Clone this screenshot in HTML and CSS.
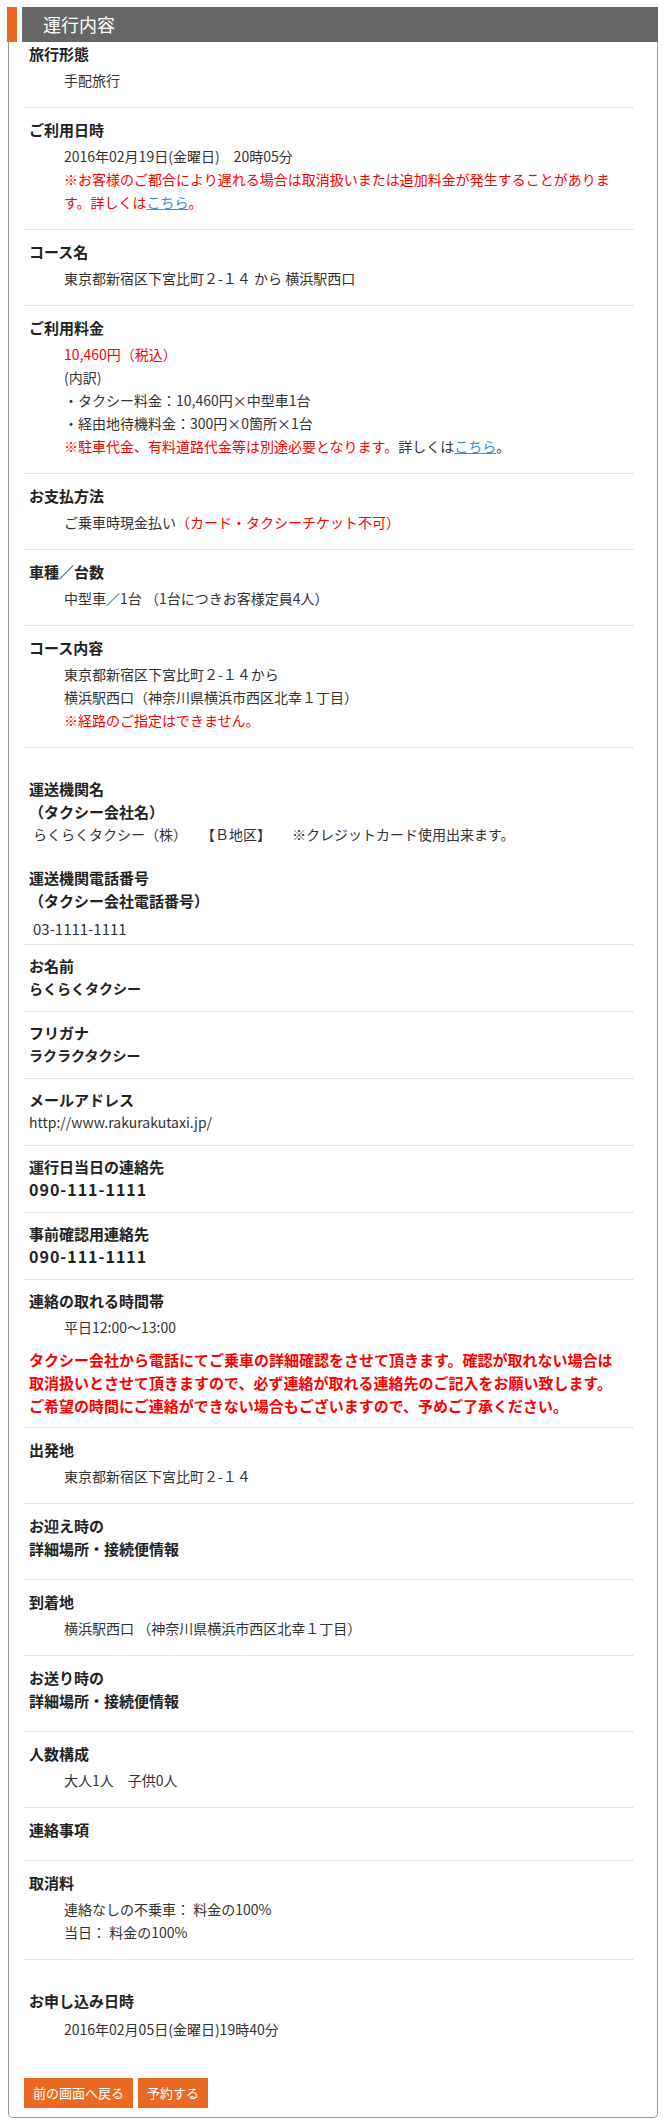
FILE: index.html
```html
<html>

<head>
	<title>運行内容</title>
	<link rel="stylesheet" href="styles.css">
</head>
<body>
	<div class="wrap">
		<h2 class="title"><span>運行内容</span></h2>
		<div class="card">
			<dl class="item">
				<dt>旅行形態</dt>
				<dd>手配旅行</dd>
			</dl>
			<dl class="item">
				<dt>ご利用日時</dt>
				<dd>2016年02月19日(金曜日)　20時05分<br>
					<span class="red">※お客様のご都合により遅れる場合は取消扱いまたは追加料金が発生することがありま</span><br><span class="red">す。詳しくは</span><a href="#">こちら</a><span class="red">。</span></dd>
			</dl>
			<dl class="item">
				<dt>コース名</dt>
				<dd>東京都新宿区下宮比町２-１４ から 横浜駅西口</dd>
			</dl>
			<dl class="item">
				<dt>ご利用料金</dt>
				<dd><span class="red">10,460円（税込）</span><br>
					(内訳)<br>
					・タクシー料金：10,460円×中型車1台<br>
					・経由地待機料金：300円×0箇所×1台<br>
					<span class="red">※駐車代金、有料道路代金等は別途必要となります。</span>詳しくは<a href="#">こちら</a>。</dd>
			</dl>
			<dl class="item">
				<dt>お支払方法</dt>
				<dd>ご乗車時現金払い<span class="red">（カード・タクシーチケット不可）</span></dd>
			</dl>
			<dl class="item">
				<dt>車種／台数</dt>
				<dd>中型車／1台 （1台につきお客様定員4人）</dd>
			</dl>
			<dl class="item">
				<dt>コース内容</dt>
				<dd>東京都新宿区下宮比町２-１４から<br>
					横浜駅西口（神奈川県横浜市西区北幸１丁目）<br>
					<span class="red">※経路のご指定はできません。</span></dd>
			</dl>

			<dl class="item plain section company">
				<dt>運送機関名<br>（タクシー会社名）</dt>
				<dd>らくらくタクシー（株）　　【Ｂ地区】　　※クレジットカード使用出来ます。</dd>
			</dl>
			<dl class="item plain company tel">
				<dt>運送機関電話番号<br>（タクシー会社電話番号）</dt>
				<dd>03-1111-1111</dd>
			</dl>
			<dl class="item plain">
				<dt>お名前</dt>
				<dd class="strong">らくらくタクシー</dd>
			</dl>
			<dl class="item plain">
				<dt>フリガナ</dt>
				<dd class="strong">ラクラクタクシー</dd>
			</dl>
			<dl class="item plain">
				<dt>メールアドレス</dt>
				<dd>http://www.rakurakutaxi.jp/</dd>
			</dl>
			<dl class="item plain">
				<dt>運行日当日の連絡先</dt>
				<dd class="strong phone">090-111-1111</dd>
			</dl>
			<dl class="item plain">
				<dt>事前確認用連絡先</dt>
				<dd class="strong phone">090-111-1111</dd>
			</dl>
			<dl class="item plain hours">
				<dt>連絡の取れる時間帯</dt>
				<dd>平日12:00～13:00</dd>
				<dd class="notice">タクシー会社から電話にてご乗車の詳細確認をさせて頂きます。確認が取れない場合は<br>取消扱いとさせて頂きますので、必ず連絡が取れる連絡先のご記入をお願い致します。<br>ご希望の時間にご連絡ができない場合もございますので、予めご了承ください。</dd>
			</dl>

			<dl class="item">
				<dt>出発地</dt>
				<dd>東京都新宿区下宮比町２-１４</dd>
			</dl>
			<dl class="item">
				<dt>お迎え時の<br>詳細場所・接続便情報</dt>
				<dd></dd>
			</dl>
			<dl class="item">
				<dt>到着地</dt>
				<dd>横浜駅西口 （神奈川県横浜市西区北幸１丁目）</dd>
			</dl>
			<dl class="item">
				<dt>お送り時の<br>詳細場所・接続便情報</dt>
				<dd></dd>
			</dl>
			<dl class="item">
				<dt>人数構成</dt>
				<dd>大人1人　子供0人</dd>
			</dl>
			<dl class="item">
				<dt>連絡事項</dt>
				<dd></dd>
			</dl>
			<dl class="item">
				<dt>取消料</dt>
				<dd>連絡なしの不乗車： 料金の100%<br>当日： 料金の100%</dd>
			</dl>

			<dl class="item section last">
				<dt>お申し込み日時</dt>
				<dd>2016年02月05日(金曜日)19時40分</dd>
			</dl>

			<div class="buttons">
				<button class="btn" type="button">前の画面へ戻る</button>
				<button class="btn" type="button">予約する</button>
			</div>
		</div>
	</div>
</body>
</html>
```

FILE: styles.css
```css
body{
	margin: 0;
	font-family: "Noto Sans CJK JP", sans-serif;
	color: #333;
	background-color: #fff;
}

.wrap{
	width: 651px;
	margin: 7px 0 0 7px;
}

.title{
	display: flex;
	margin: 0;
	height: 35px;
	border-left: 10px solid #eb6a23;
	font-size: 18px;
	font-weight: normal;
}

.title span{
	flex: 1;
	margin-left: 5px;
	padding-left: 21px;
	background-color: #666;
	color: #fff;
	line-height: 35px;
}

.card{
	margin-left: 1px;
	padding: 0 24px 9px 15px;
	border: 1px solid #999;
	border-top: 0;
	border-radius: 0 0 5px 5px;
}

.item{
	margin: 0;
	padding: 10px 0 15px;
	border-bottom: 1px dotted #ccc;
}

.item:first-child{
	padding-top: 0;
}

.item dt{
	padding-left: 5px;
	font-size: 15px;
	font-weight: bold;
	line-height: 23px;
	color: #222;
}

.item dd{
	margin: 4px 0 0;
	padding: 0 12px 0 40px;
	font-size: 14px;
	line-height: 23px;
}

.red{
	color: #f00;
}

a{
	color: #3b8fd9;
}

/* rows without indent */
.plain{
	padding: 9px 0 11px;
}

.plain dd{
	margin-top: 0;
	padding-left: 5px;
}

.section{
	margin-top: 19px;
}

.company{
	padding: 10px 0 10px;
	border-bottom: 0;
}

.company dd{
	padding-left: 9px;
}

.tel{
	padding-bottom: 4px;
	border-bottom: 1px dotted #ccc;
}

.tel dd{
	margin-top: 5px;
	font-size: 15px;
}

.strong{
	font-size: 15px;
	font-weight: bold;
	color: #222;
}

.item .phone{
	font-size: 16px;
	letter-spacing: 1px;
}

.hours{
	padding-bottom: 10px;
}

.hours dd{
	margin-top: 4px;
	padding-left: 40px;
}

.hours .notice{
	margin-top: 9px;
	padding-left: 5px;
	font-size: 15px;
	font-weight: bold;
	color: #f00;
}

.last{
	border-bottom: 0;
}

.last dd{
	margin-top: 6px;
}

.buttons{
	display: flex;
	gap: 5px;
	margin-top: 22px;
}

.btn{
	padding: 0 9px;
	border: 0;
	background-color: #eb6a23;
	color: #fff;
	font-family: "Noto Sans CJK JP", sans-serif;
	font-size: 13px;
	line-height: 30px;
}
```
